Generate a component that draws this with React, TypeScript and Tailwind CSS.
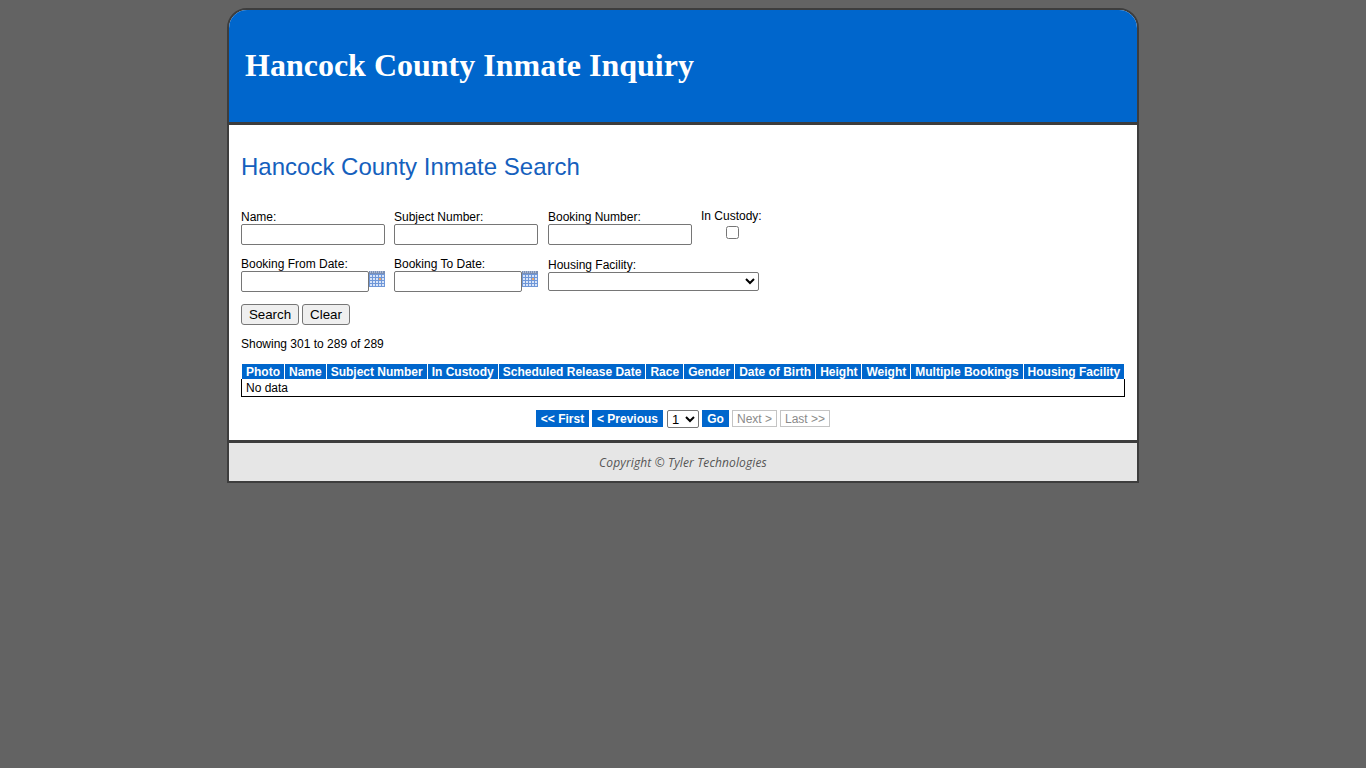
const sans = "font-['Liberation_Sans',Arial,sans-serif]";

function Calendar() {
  return (
    <svg width="16" height="16" viewBox="0 0 16 16" className="shrink-0 block mt-0">
      <rect x="0" y="0" width="16" height="16" fill="#6f97d8" />
      <rect x="0" y="0" width="16" height="3" fill="#7a8fb5" />
      <path d="M1 1h1M3 1h1M5 1h1M7 1h1M9 1h1M11 1h1M13 1h1" stroke="#dfe7f5" strokeWidth="1" />
      {[1, 4, 7, 10, 13].map((x) =>
        [4, 7, 10, 13].map((y) => (
          <rect key={`${x}-${y}`} x={x} y={y} width="2" height="2" fill={x === 10 && y === 7 ? "#f0a868" : "#d8e4f8"} />
        ))
      )}
    </svg>
  );
}

function Field({ label, children, w }: { label: string; children: React.ReactNode; w: string }) {
  return (
    <div className={`${w} shrink-0`}>
      <div className="text-xs leading-[14px] h-[14px] text-black">{label}</div>
      {children}
    </div>
  );
}

const inputCls = "block h-[21px] border border-[#767676] rounded-[2px] bg-white";
const headers = ["Photo", "Name", "Subject Number", "In Custody", "Scheduled Release Date", "Race", "Gender", "Date of Birth", "Height", "Weight", "Multiple Bookings", "Housing Facility"];
const blueBtn = "h-[17px] bg-[#0066cc] text-white font-bold leading-[18px] text-center";
const greyBtn = "h-[17px] border border-[#c4c4c4] text-[#8a8a8a] leading-[16px] text-center";

export default function App() {
  return (
    <div className={`min-h-[768px] bg-[#636363] pt-2 ${sans}`}>
      <div className="mx-auto w-[912px] border-2 border-[#3d3d3d] rounded-t-[20px] overflow-hidden bg-white">
        <div className="h-[112px] bg-[#0066cc] flex items-center pl-4 pb-[2px]">
          <div className="font-['Liberation_Serif',serif] font-bold text-[32px] leading-none text-white">Hancock County Inmate Inquiry</div>
        </div>
        <div className="border-t-[3px] border-[#3d3d3d] px-3 pt-[28px] h-[318px]">
          <h1 className="text-2xl leading-[28px] text-[#1560bd]">Hancock County Inmate Search</h1>
          <div className="mt-[29px] flex">
            <Field label="Name:" w="w-[153px]"><input className={`${inputCls} w-[144px]`} /></Field>
            <Field label="Subject Number:" w="w-[154px]"><input className={`${inputCls} w-[144px]`} /></Field>
            <Field label="Booking Number:" w="w-[153px]"><input className={`${inputCls} w-[144px]`} /></Field>
            <div className="-mt-[1px] flex flex-col items-center">
              <div className="text-xs leading-[14px] text-black">In Custody:</div>
              <input type="checkbox" className="mt-[3px] ml-[2px] w-[13px] h-[13px]" />
            </div>
          </div>
          <div className="mt-[12px] flex">
            <Field label="Booking From Date:" w="w-[153px]">
              <div className="flex items-start"><input className={`${inputCls} w-[128px]`} /><Calendar /></div>
            </Field>
            <Field label="Booking To Date:" w="w-[154px]">
              <div className="flex items-start"><input className={`${inputCls} w-[128px]`} /><Calendar /></div>
            </Field>
            <div className="w-[211px] mt-[1px]">
              <div className="text-xs leading-[14px] text-black">Housing Facility:</div>
              <select className="block h-[19px] w-[211px] border border-[#767676] rounded-[2px] bg-white text-xs"><option></option></select>
            </div>
          </div>
          <div className="mt-[12px] flex gap-[3px]">
            <button className="h-[21px] w-[58px] border border-[#767676] rounded-[3px] bg-[#efefef] text-[13.33px] leading-none text-black">Search</button>
            <button className="h-[21px] w-[48px] border border-[#767676] rounded-[3px] bg-[#efefef] text-[13.33px] leading-none text-black">Clear</button>
          </div>
          <div className="mt-[12px] text-xs leading-[14px] text-black">Showing 301 to 289 of 289</div>
          <table className="mt-[13px] w-[884px] border-collapse text-xs">
            <thead>
              <tr>
                {headers.map((h) => (
                  <th key={h} className="h-[15px] p-0 px-[4px] bg-[#0066cc] text-white font-bold leading-[14px] whitespace-nowrap border-x border-white text-center">{h}</th>
                ))}
              </tr>
            </thead>
            <tbody>
              <tr>
                <td colSpan={12} className="h-[17px] px-[4px] pt-[1px] pb-0 leading-[14px] text-black border border-t-0 border-black">No data</td>
              </tr>
            </tbody>
          </table>
          <div className="mt-[13px] flex justify-center items-center gap-[3px] text-xs">
            <span className={`${blueBtn} w-[53px]`}>&lt;&lt; First</span>
            <span className={`${blueBtn} w-[71px] mr-[1px]`}>&lt; Previous</span>
            <select className="h-[18px] w-[32px] border border-[#767676] rounded-[2px] bg-white text-[13px] text-black"><option>1</option></select>
            <span className={`${blueBtn} w-[27px]`}>Go</span>
            <span className={`${greyBtn} w-[45px]`}>Next &gt;</span>
            <span className={`${greyBtn} w-[50px]`}>Last &gt;&gt;</span>
          </div>
        </div>
        <div className="border-t-[3px] border-[#3d3d3d] h-[41px] pt-[1px] bg-[#e6e6e6] flex items-center justify-center">
          <span className="font-['Open_Sans',sans-serif] italic text-xs tracking-[0.13px] text-[#555555]">Copyright © Tyler Technologies</span>
        </div>
      </div>
    </div>
  );
}
